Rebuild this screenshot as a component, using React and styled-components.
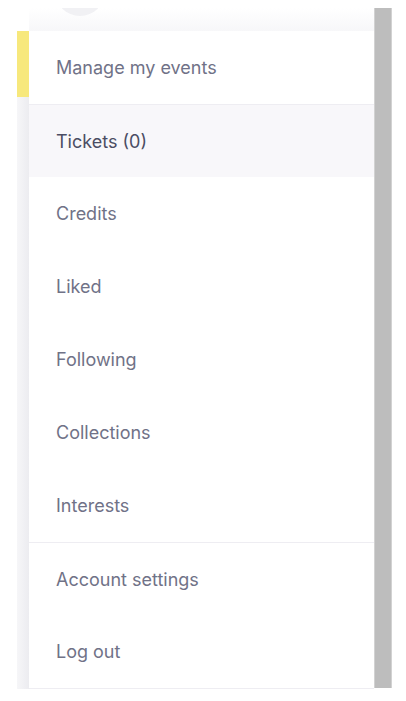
import React from "react";
import styled, { createGlobalStyle } from "styled-components";

const Global = createGlobalStyle`
  html, body { margin: 0; padding: 0; background: #ffffff; }
  body { font-family: Inter, "Noto Sans", "Liberation Sans", sans-serif; }
`;

const Page = styled.div`
  width: 406px;
  height: 701px;
  display: flex;
  align-items: flex-start;
  padding: 8px 0 0 17px;
  box-sizing: border-box;
  overflow: hidden;
`;

const Drawer = styled.div`
  width: 357px;
  display: flex;
  flex-direction: column;
`;

const Header = styled.div`
  height: 23px;
  position: relative;
  overflow: hidden;
  background: linear-gradient(to bottom, #ffffff 0%, #f7f7f9 100%);
  margin-left: 12px;
`;

const Avatar = styled.div`
  position: absolute;
  left: 26px;
  top: -42px;
  width: 50px;
  height: 50px;
  border-radius: 50%;
  background: #f1f1f4;
`;

const Body = styled.div`
  display: flex;
`;

const Accent = styled.div`
  width: 12px;
  flex: none;
  display: flex;
  flex-direction: column;
  background: linear-gradient(to right, #f6f6f8, #ececf0);
`;

const AccentMark = styled.div`
  height: 66px;
  background: #f7e87c;
`;

const Menu = styled.nav`
  flex: 1;
  display: flex;
  flex-direction: column;
  background: #ffffff;
  border-bottom: 1px solid #eeedf2;
`;

const Item = styled.div`
  height: 73px;
  box-sizing: border-box;
  display: flex;
  align-items: center;
  padding-left: 27px;
  font-size: 18px;
  color: ${(p) => (p.$active ? "#4b4d63" : "#707287")};
  background: ${(p) => (p.$active ? "#f8f7fa" : "transparent")};
  border-top: ${(p) => (p.$divider ? "1px solid #eeedf2" : "none")};
`;

const Scrollbar = styled.div`
  width: 18px;
  height: 680px;
  flex: none;
  background: #bdbdbd;
  box-shadow: inset 1px 0 0 #d2d2d2, inset -1px 0 0 #d2d2d2;
`;

const items = [
  { label: "Manage my events" },
  { label: "Tickets (0)", active: true, divider: true },
  { label: "Credits" },
  { label: "Liked" },
  { label: "Following" },
  { label: "Collections" },
  { label: "Interests" },
  { label: "Account settings", divider: true },
  { label: "Log out" },
];

export default function App() {
  return (
    <>
      <Global />
      <Page>
        <Drawer>
          <Header>
            <Avatar />
          </Header>
          <Body>
            <Accent>
              <AccentMark />
            </Accent>
            <Menu>
              {items.map((it) => (
                <Item key={it.label} $active={it.active} $divider={it.divider}>
                  {it.label}
                </Item>
              ))}
            </Menu>
          </Body>
        </Drawer>
        <Scrollbar />
      </Page>
    </>
  );
}
